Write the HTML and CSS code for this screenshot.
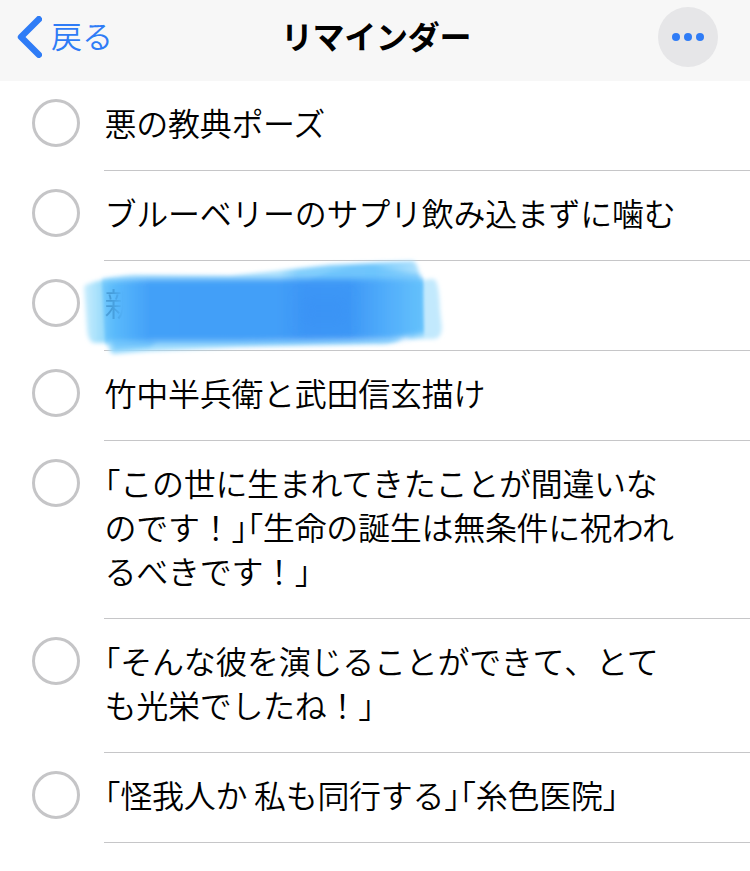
FILE: index.html
```
<!DOCTYPE html>
<html lang="ja">
<head>
<meta charset="utf-8">
<title>リマインダー</title>
<link rel="stylesheet" href="styles.css">
</head>
<body>
<header class="navbar">
  <a class="back"><svg class="chevron" width="25" height="42" viewBox="0 0 25 42"><path d="M21.8 3.2 4 21 21.8 38.8" fill="none" stroke="currentColor" stroke-width="6.4" stroke-linecap="round" stroke-linejoin="round"/></svg><span class="back-label">戻る</span></a>
  <h1 class="title">リマインダー</h1>
  <button class="more" aria-label="その他"><svg width="60" height="60" viewBox="0 0 60 60"><g fill="#2f7cf6"><circle cx="18" cy="30" r="4"/><circle cx="30" cy="30" r="4"/><circle cx="42" cy="30" r="4"/></g></svg></button>
</header>
<main class="list">
  <div class="item"><i class="check"></i><div class="text"><span class="line">悪の教典ポーズ</span></div></div>
  <div class="item"><i class="check"></i><div class="text"><span class="line">ブルーベリーのサプリ飲み込まずに噛む</span></div></div>
  <div class="item"><i class="check"></i><div class="text"><span class="line covered">新</span></div>
    <svg class="marker" width="376" height="110" viewBox="75 251 376 110">
      <defs>
        <linearGradient id="edge" x1="84" x2="130" y1="0" y2="0" gradientUnits="userSpaceOnUse"><stop offset="0" stop-color="#c9edfd"/><stop offset=".4" stop-color="#9bdcfb"/><stop offset="1" stop-color="#8cd5fc"/></linearGradient>
        <linearGradient id="ink" x1="94" x2="424" y1="0" y2="0" gradientUnits="userSpaceOnUse"><stop offset="0" stop-color="#84d2fc"/><stop offset=".06" stop-color="#5abafb"/><stop offset=".17" stop-color="#43a0f8"/><stop offset=".55" stop-color="#439ff8"/><stop offset=".64" stop-color="#3d96f6"/><stop offset=".77" stop-color="#3d97f6"/><stop offset=".88" stop-color="#50acfa"/><stop offset="1" stop-color="#65c2fc"/></linearGradient>
        <linearGradient id="top" x1="110" x2="422" y1="0" y2="0" gradientUnits="userSpaceOnUse"><stop offset="0" stop-color="#aee2fd"/><stop offset=".54" stop-color="#b0e3fd"/><stop offset=".6" stop-color="#86d0fc"/><stop offset=".85" stop-color="#7accfd"/><stop offset="1" stop-color="#b2e2fd"/></linearGradient>
        <filter id="soft" x="-10%" y="-20%" width="120%" height="140%"><feGaussianBlur stdDeviation="2.2"/></filter>
        <filter id="core" x="-10%" y="-20%" width="120%" height="140%"><feGaussianBlur stdDeviation="1.5 3"/></filter>
        <filter id="wide" x="-30%" y="-40%" width="160%" height="180%"><feGaussianBlur stdDeviation="7"/></filter>
      </defs>
      <g filter="url(#soft)">
        <path d="M84 286Q92 281 118 277L150 276V342L94 343Q88 342 87 330Z" fill="url(#edge)"/>
        <path d="M416 280 434 279Q439 281 440 310L442 328Q441 339 434 339H408Z" fill="#c2e9fd"/>
        <path d="M107 338H402Q394 345 375 344L240 347 150 351 114 354Q108 353 107 338Z" fill="#a2defd"/>
        <path d="M112 340H158L150 347 114 350Z" fill="#7bcbfc"/>
        <path d="M112 280Q116 276 134 275L230 276 284 270 330 265 412 261Q418 261 421 283L423 300H110Z" fill="url(#top)"/>
        <path d="M310 280Q350 262 374 266 390 270 420 274L423 290H310Z" fill="#62bdfc" opacity=".5"/>
      </g>
      <path d="M102 281Q120 279 150 279H423L424 334Q405 338 390 340L240 342 105 342Z" fill="url(#ink)" filter="url(#core)"/>
      <path d="M300 296H348V326H300Z" fill="#358cf3" opacity=".25" filter="url(#wide)"/>
    </svg>
  </div>
  <div class="item"><i class="check"></i><div class="text"><span class="line">竹中半兵衛と武田信玄描け</span></div></div>
  <div class="item"><i class="check"></i><div class="text"><span class="line">「この世に生まれてきたことが間違いな</span><span class="line">のです<span class="full">！</span>」「生命の誕生は無条件に祝われ</span><span class="line">るべきです<span class="full">！</span>」</span></div></div>
  <div class="item"><i class="check"></i><div class="text"><span class="line">「そんな彼を演じることができて<span class="full">、</span>とて</span><span class="line">も光栄でしたね<span class="full">！</span>」</span></div></div>
  <div class="item"><i class="check"></i><div class="text"><span class="line">「怪我人か 私も同行する」「糸色医院」</span></div></div>
</main>
</body>
</html>
```
FILE: styles.css
```
* { box-sizing: border-box; }
body { margin: 0; height: 871px; overflow: hidden; background: #fff; color: #000; font-family: "Noto Sans CJK JP", sans-serif; }
.navbar { height: 81px; background: #f7f7f7; display: grid; grid-template-columns: 1fr auto 1fr; align-items: center; padding: 0 32px 7px; }
.back { display: flex; align-items: center; gap: 9px; margin-left: -15px; color: #2f7cf6; font-size: 31px; font-weight: 350; line-height: 44px; }
.back-label { padding-bottom: 4px; }
.chevron { display: block; }
.title { margin: 0; padding: 0 0 5px 2px; font-size: 32px; line-height: 44px; font-weight: 700; letter-spacing: -0.3px; }
.more { justify-self: end; width: 60px; height: 60px; padding: 0; border: 0; border-radius: 50%; background: #e6e6e8; }
.more svg { display: block; }
.item { position: relative; display: flex; gap: 24px; padding-left: 32px; }
.check { flex: none; width: 48px; height: 48px; margin-top: 18px; border: 3px solid #c5c5c7; border-radius: 50%; }
.text { flex: 1; padding: 19px 0 26px 0.5px; border-bottom: 1px solid #c6c6c8; }
.line { display: block; width: max-content; font-size: 32px; font-weight: 350; line-height: 44px; letter-spacing: -0.28px; white-space: nowrap; font-feature-settings: "halt"; }
.full { font-feature-settings: normal; }
.covered { position: relative; z-index: 1; color: transparent; background: linear-gradient(90deg, rgba(30, 105, 165, .4) 20%, rgba(30, 105, 165, .15) 45%, transparent 60%); background-clip: text; -webkit-background-clip: text; }
.marker { position: absolute; left: 75px; top: -10px; }
```
